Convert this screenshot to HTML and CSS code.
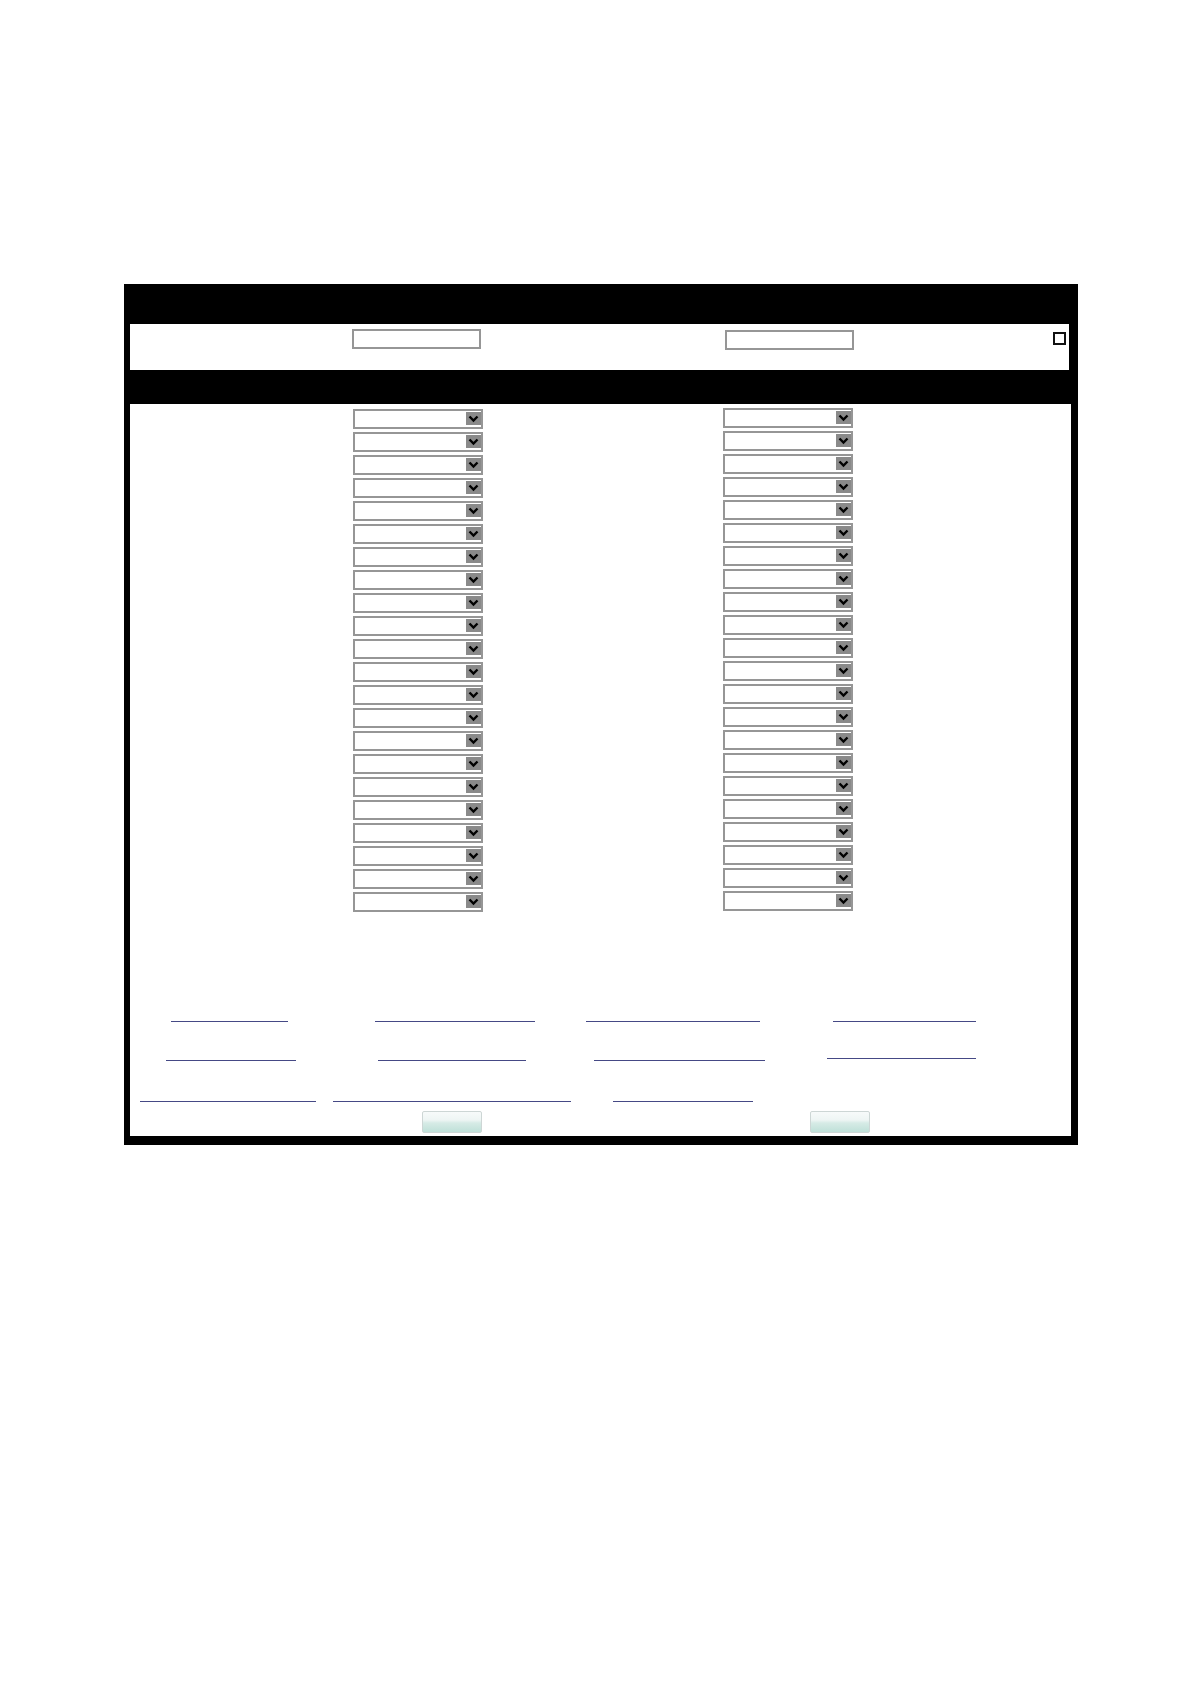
FILE: index.html
```html
<!DOCTYPE html>
<html>
<head>
<meta charset="utf-8">
<title>Form</title>
<link rel="stylesheet" href="styles.css">
</head>
<body>
<div class="frame">
  <div class="toprow">
    <input class="txt txt1" type="text">
    <input class="txt txt2" type="text">
    <span class="chk"></span>
  </div>
  <div class="content">
    <div class="cols">
      <div class="col col-left">
        <div class="sel"><span class="arr"><svg viewBox="0 0 15 13" width="15" height="13"><path d="M3.5 4.5 L7.5 8.5 L11.5 4.5" fill="none" stroke="#000" stroke-width="2.4"/></svg></span></div>
        <div class="sel"><span class="arr"><svg viewBox="0 0 15 13" width="15" height="13"><path d="M3.5 4.5 L7.5 8.5 L11.5 4.5" fill="none" stroke="#000" stroke-width="2.4"/></svg></span></div>
        <div class="sel"><span class="arr"><svg viewBox="0 0 15 13" width="15" height="13"><path d="M3.5 4.5 L7.5 8.5 L11.5 4.5" fill="none" stroke="#000" stroke-width="2.4"/></svg></span></div>
        <div class="sel"><span class="arr"><svg viewBox="0 0 15 13" width="15" height="13"><path d="M3.5 4.5 L7.5 8.5 L11.5 4.5" fill="none" stroke="#000" stroke-width="2.4"/></svg></span></div>
        <div class="sel"><span class="arr"><svg viewBox="0 0 15 13" width="15" height="13"><path d="M3.5 4.5 L7.5 8.5 L11.5 4.5" fill="none" stroke="#000" stroke-width="2.4"/></svg></span></div>
        <div class="sel"><span class="arr"><svg viewBox="0 0 15 13" width="15" height="13"><path d="M3.5 4.5 L7.5 8.5 L11.5 4.5" fill="none" stroke="#000" stroke-width="2.4"/></svg></span></div>
        <div class="sel"><span class="arr"><svg viewBox="0 0 15 13" width="15" height="13"><path d="M3.5 4.5 L7.5 8.5 L11.5 4.5" fill="none" stroke="#000" stroke-width="2.4"/></svg></span></div>
        <div class="sel"><span class="arr"><svg viewBox="0 0 15 13" width="15" height="13"><path d="M3.5 4.5 L7.5 8.5 L11.5 4.5" fill="none" stroke="#000" stroke-width="2.4"/></svg></span></div>
        <div class="sel"><span class="arr"><svg viewBox="0 0 15 13" width="15" height="13"><path d="M3.5 4.5 L7.5 8.5 L11.5 4.5" fill="none" stroke="#000" stroke-width="2.4"/></svg></span></div>
        <div class="sel"><span class="arr"><svg viewBox="0 0 15 13" width="15" height="13"><path d="M3.5 4.5 L7.5 8.5 L11.5 4.5" fill="none" stroke="#000" stroke-width="2.4"/></svg></span></div>
        <div class="sel"><span class="arr"><svg viewBox="0 0 15 13" width="15" height="13"><path d="M3.5 4.5 L7.5 8.5 L11.5 4.5" fill="none" stroke="#000" stroke-width="2.4"/></svg></span></div>
        <div class="sel"><span class="arr"><svg viewBox="0 0 15 13" width="15" height="13"><path d="M3.5 4.5 L7.5 8.5 L11.5 4.5" fill="none" stroke="#000" stroke-width="2.4"/></svg></span></div>
        <div class="sel"><span class="arr"><svg viewBox="0 0 15 13" width="15" height="13"><path d="M3.5 4.5 L7.5 8.5 L11.5 4.5" fill="none" stroke="#000" stroke-width="2.4"/></svg></span></div>
        <div class="sel"><span class="arr"><svg viewBox="0 0 15 13" width="15" height="13"><path d="M3.5 4.5 L7.5 8.5 L11.5 4.5" fill="none" stroke="#000" stroke-width="2.4"/></svg></span></div>
        <div class="sel"><span class="arr"><svg viewBox="0 0 15 13" width="15" height="13"><path d="M3.5 4.5 L7.5 8.5 L11.5 4.5" fill="none" stroke="#000" stroke-width="2.4"/></svg></span></div>
        <div class="sel"><span class="arr"><svg viewBox="0 0 15 13" width="15" height="13"><path d="M3.5 4.5 L7.5 8.5 L11.5 4.5" fill="none" stroke="#000" stroke-width="2.4"/></svg></span></div>
        <div class="sel"><span class="arr"><svg viewBox="0 0 15 13" width="15" height="13"><path d="M3.5 4.5 L7.5 8.5 L11.5 4.5" fill="none" stroke="#000" stroke-width="2.4"/></svg></span></div>
        <div class="sel"><span class="arr"><svg viewBox="0 0 15 13" width="15" height="13"><path d="M3.5 4.5 L7.5 8.5 L11.5 4.5" fill="none" stroke="#000" stroke-width="2.4"/></svg></span></div>
        <div class="sel"><span class="arr"><svg viewBox="0 0 15 13" width="15" height="13"><path d="M3.5 4.5 L7.5 8.5 L11.5 4.5" fill="none" stroke="#000" stroke-width="2.4"/></svg></span></div>
        <div class="sel"><span class="arr"><svg viewBox="0 0 15 13" width="15" height="13"><path d="M3.5 4.5 L7.5 8.5 L11.5 4.5" fill="none" stroke="#000" stroke-width="2.4"/></svg></span></div>
        <div class="sel"><span class="arr"><svg viewBox="0 0 15 13" width="15" height="13"><path d="M3.5 4.5 L7.5 8.5 L11.5 4.5" fill="none" stroke="#000" stroke-width="2.4"/></svg></span></div>
        <div class="sel"><span class="arr"><svg viewBox="0 0 15 13" width="15" height="13"><path d="M3.5 4.5 L7.5 8.5 L11.5 4.5" fill="none" stroke="#000" stroke-width="2.4"/></svg></span></div>
      </div>
      <div class="col col-right">
        <div class="sel"><span class="arr"><svg viewBox="0 0 15 13" width="15" height="13"><path d="M3.5 4.5 L7.5 8.5 L11.5 4.5" fill="none" stroke="#000" stroke-width="2.4"/></svg></span></div>
        <div class="sel"><span class="arr"><svg viewBox="0 0 15 13" width="15" height="13"><path d="M3.5 4.5 L7.5 8.5 L11.5 4.5" fill="none" stroke="#000" stroke-width="2.4"/></svg></span></div>
        <div class="sel"><span class="arr"><svg viewBox="0 0 15 13" width="15" height="13"><path d="M3.5 4.5 L7.5 8.5 L11.5 4.5" fill="none" stroke="#000" stroke-width="2.4"/></svg></span></div>
        <div class="sel"><span class="arr"><svg viewBox="0 0 15 13" width="15" height="13"><path d="M3.5 4.5 L7.5 8.5 L11.5 4.5" fill="none" stroke="#000" stroke-width="2.4"/></svg></span></div>
        <div class="sel"><span class="arr"><svg viewBox="0 0 15 13" width="15" height="13"><path d="M3.5 4.5 L7.5 8.5 L11.5 4.5" fill="none" stroke="#000" stroke-width="2.4"/></svg></span></div>
        <div class="sel"><span class="arr"><svg viewBox="0 0 15 13" width="15" height="13"><path d="M3.5 4.5 L7.5 8.5 L11.5 4.5" fill="none" stroke="#000" stroke-width="2.4"/></svg></span></div>
        <div class="sel"><span class="arr"><svg viewBox="0 0 15 13" width="15" height="13"><path d="M3.5 4.5 L7.5 8.5 L11.5 4.5" fill="none" stroke="#000" stroke-width="2.4"/></svg></span></div>
        <div class="sel"><span class="arr"><svg viewBox="0 0 15 13" width="15" height="13"><path d="M3.5 4.5 L7.5 8.5 L11.5 4.5" fill="none" stroke="#000" stroke-width="2.4"/></svg></span></div>
        <div class="sel"><span class="arr"><svg viewBox="0 0 15 13" width="15" height="13"><path d="M3.5 4.5 L7.5 8.5 L11.5 4.5" fill="none" stroke="#000" stroke-width="2.4"/></svg></span></div>
        <div class="sel"><span class="arr"><svg viewBox="0 0 15 13" width="15" height="13"><path d="M3.5 4.5 L7.5 8.5 L11.5 4.5" fill="none" stroke="#000" stroke-width="2.4"/></svg></span></div>
        <div class="sel"><span class="arr"><svg viewBox="0 0 15 13" width="15" height="13"><path d="M3.5 4.5 L7.5 8.5 L11.5 4.5" fill="none" stroke="#000" stroke-width="2.4"/></svg></span></div>
        <div class="sel"><span class="arr"><svg viewBox="0 0 15 13" width="15" height="13"><path d="M3.5 4.5 L7.5 8.5 L11.5 4.5" fill="none" stroke="#000" stroke-width="2.4"/></svg></span></div>
        <div class="sel"><span class="arr"><svg viewBox="0 0 15 13" width="15" height="13"><path d="M3.5 4.5 L7.5 8.5 L11.5 4.5" fill="none" stroke="#000" stroke-width="2.4"/></svg></span></div>
        <div class="sel"><span class="arr"><svg viewBox="0 0 15 13" width="15" height="13"><path d="M3.5 4.5 L7.5 8.5 L11.5 4.5" fill="none" stroke="#000" stroke-width="2.4"/></svg></span></div>
        <div class="sel"><span class="arr"><svg viewBox="0 0 15 13" width="15" height="13"><path d="M3.5 4.5 L7.5 8.5 L11.5 4.5" fill="none" stroke="#000" stroke-width="2.4"/></svg></span></div>
        <div class="sel"><span class="arr"><svg viewBox="0 0 15 13" width="15" height="13"><path d="M3.5 4.5 L7.5 8.5 L11.5 4.5" fill="none" stroke="#000" stroke-width="2.4"/></svg></span></div>
        <div class="sel"><span class="arr"><svg viewBox="0 0 15 13" width="15" height="13"><path d="M3.5 4.5 L7.5 8.5 L11.5 4.5" fill="none" stroke="#000" stroke-width="2.4"/></svg></span></div>
        <div class="sel"><span class="arr"><svg viewBox="0 0 15 13" width="15" height="13"><path d="M3.5 4.5 L7.5 8.5 L11.5 4.5" fill="none" stroke="#000" stroke-width="2.4"/></svg></span></div>
        <div class="sel"><span class="arr"><svg viewBox="0 0 15 13" width="15" height="13"><path d="M3.5 4.5 L7.5 8.5 L11.5 4.5" fill="none" stroke="#000" stroke-width="2.4"/></svg></span></div>
        <div class="sel"><span class="arr"><svg viewBox="0 0 15 13" width="15" height="13"><path d="M3.5 4.5 L7.5 8.5 L11.5 4.5" fill="none" stroke="#000" stroke-width="2.4"/></svg></span></div>
        <div class="sel"><span class="arr"><svg viewBox="0 0 15 13" width="15" height="13"><path d="M3.5 4.5 L7.5 8.5 L11.5 4.5" fill="none" stroke="#000" stroke-width="2.4"/></svg></span></div>
        <div class="sel"><span class="arr"><svg viewBox="0 0 15 13" width="15" height="13"><path d="M3.5 4.5 L7.5 8.5 L11.5 4.5" fill="none" stroke="#000" stroke-width="2.4"/></svg></span></div>
      </div>
    </div>
    <div class="links">
      <div class="lrow r1">
        <a class="lk a1" href="#"></a>
        <a class="lk a2" href="#"></a>
        <a class="lk a3" href="#"></a>
        <a class="lk a4" href="#"></a>
      </div>
      <div class="lrow r2">
        <a class="lk b1" href="#"></a>
        <a class="lk b2" href="#"></a>
        <a class="lk b3" href="#"></a>
        <a class="lk b4" href="#"></a>
      </div>
      <div class="lrow r3">
        <a class="lk c1" href="#"></a>
        <a class="lk c2" href="#"></a>
        <a class="lk c3" href="#"></a>
      </div>
    </div>
    <div class="btns">
      <button class="btn btn1" type="button"></button>
      <button class="btn btn2" type="button"></button>
    </div>
  </div>
</div>
</body>
</html>
```

FILE: styles.css
```css
html, body {
  margin: 0;
  padding: 0;
  background: #fff;
  font-family: "Liberation Sans", Arial, sans-serif;
}

.frame {
  box-sizing: border-box;
  margin: 284px 0 0 124px;
  width: 954px;
  background: #000;
  padding: 40px 0 9px 0;
}

.toprow {
  box-sizing: border-box;
  margin-left: 6px;
  width: 939px;
  height: 46px;
  background: #fff;
  display: flex;
  align-items: flex-start;
  padding-top: 5px;
}

.txt {
  box-sizing: border-box;
  width: 129px;
  height: 20px;
  border: 2px solid #969696;
  background: #fff;
  padding: 0;
  margin: 0;
  outline: none;
}

.txt1 { margin-left: 222px; }
.txt2 { margin-left: 244px; margin-top: 1px; }

.chk {
  box-sizing: border-box;
  width: 13px;
  height: 13px;
  border: 2px solid #111;
  background: #fff;
  margin-left: auto;
  margin-right: 3px;
  margin-top: 3px;
}

.content {
  box-sizing: border-box;
  margin-left: 6px;
  margin-top: 34px;
  width: 941px;
  height: 732px;
  background: #fff;
  padding-top: 5px;
}

.cols {
  display: flex;
  align-items: flex-start;
}

.col {
  display: flex;
  flex-direction: column;
  gap: 3px;
}

.col-left { margin-left: 223px; }
.col-right { margin-left: 240px; margin-top: -1px; }

.sel {
  box-sizing: border-box;
  width: 130px;
  height: 20px;
  border: 2px solid #969696;
  background: #fff;
  display: flex;
  justify-content: flex-end;
  align-items: flex-start;
}

.arr {
  display: block;
  width: 15px;
  height: 13px;
  margin-top: 1px;
  background: #8a8a8a;
}

.arr svg { display: block; }

.links {
  display: flex;
  flex-direction: column;
}

.lrow {
  display: flex;
  height: 16px;
  align-items: flex-end;
}

.r1 { margin-top: 94px; }
.r2 { margin-top: 23px; }
.r3 { margin-top: 25px; }

.lk {
  display: block;
  flex: none;
  height: 15px;
  border-bottom: 1px solid #454985;
  text-decoration: none;
}

.a1 { margin-left: 41px; width: 117px; }
.a2 { margin-left: 87px; width: 160px; }
.a3 { margin-left: 51px; width: 174px; }
.a4 { margin-left: 73px; width: 143px; }

.b1 { margin-left: 36px; width: 130px; }
.b2 { margin-left: 82px; width: 148px; }
.b3 { margin-left: 68px; width: 171px; }
.b4 { margin-left: 62px; width: 149px; margin-bottom: 2px; }

.c1 { margin-left: 10px; width: 176px; }
.c2 { margin-left: 17px; width: 238px; }
.c3 { margin-left: 42px; width: 140px; }

.btns {
  display: flex;
  margin-top: 9px;
}

.btn {
  box-sizing: border-box;
  width: 60px;
  height: 22px;
  margin: 0;
  padding: 0;
  border: 1px solid #cdd6d5;
  border-radius: 2px;
  background: linear-gradient(to bottom, #f7fafa 0%, #eef5f4 40%, #d6ebe6 55%, #bfe0d8 100%);
}

.btn1 { margin-left: 292px; }
.btn2 { margin-left: 328px; }
```
